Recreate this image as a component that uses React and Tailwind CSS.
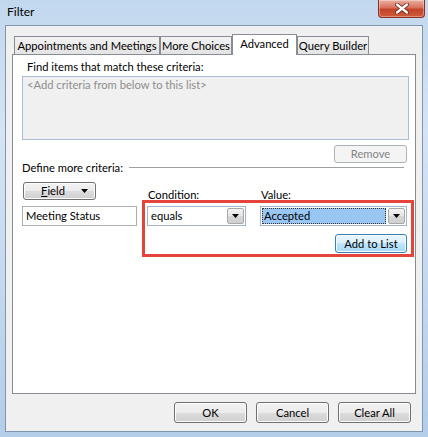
const btn =
  "flex items-center justify-center rounded-[3px] border border-[#707070] bg-[linear-gradient(#f2f2f2_0%,#ebebeb_50%,#dddddd_50%,#cfcfcf_100%)] shadow-[inset_0_0_0_1px_#fcfcfc] text-black";

function Tri() {
  return (
    <svg width="7" height="4" viewBox="0 0 7 4">
      <path d="M0 0H7L3.5 4Z" fill="#000" />
    </svg>
  );
}

function DropBtn() {
  return (
    <div className="m-[1px] flex w-[17px] items-center justify-center rounded-[2px] border border-[#a9a9a9] bg-[linear-gradient(#f3f3f3_0%,#e6e6e6_50%,#d7d7d7_50%,#cfcfcf_100%)]">
      <Tri />
    </div>
  );
}

function Tab({ label, w, selected }) {
  if (selected) {
    return (
      <div
        className={`relative z-10 -mb-px flex h-[21px] items-start justify-center whitespace-nowrap border border-b-0 border-[#898c95] bg-white pt-[2px] ${w}`}
      >
        {label}
      </div>
    );
  }
  return (
    <div
      className={`flex h-[18px] items-center justify-center whitespace-nowrap border border-b-0 border-[#898c95] bg-[linear-gradient(#f3f3f3,#e3e3e3)] ${w}`}
    >
      {label}
    </div>
  );
}

export default function App() {
  return (
    <div className="h-[437px] w-[428px] overflow-hidden bg-[linear-gradient(180deg,#c2d8ee_0%,#d4e4f4_30%,#c6daef_60%,#b4cde8_100%)] font-['Lato',sans-serif] text-[11.2px] leading-[14px] text-black">
      {/* title bar */}
      <div className="flex h-[25px] items-start justify-between">
        <div className="pl-[7px] pt-[5px] text-[12px]">Filter</div>
        <div className="mr-[3px] flex h-[18px] w-[47px] items-center justify-center rounded-b-[4px] border border-t-0 border-[#8a2f22] bg-[linear-gradient(#eab0a0_0%,#d8705c_45%,#c24428_55%,#d0593c_100%)] shadow-[inset_0_0_0_1px_rgba(255,255,255,0.35)]">
          <svg width="14" height="11" viewBox="0 0 14 11">
            <path
              d="M2 1.5L12 9.5M12 1.5L2 9.5"
              stroke="#5a1a10"
              strokeWidth="3.8"
              strokeLinecap="round"
            />
            <path
              d="M2 1.5L12 9.5M12 1.5L2 9.5"
              stroke="#fff"
              strokeWidth="2.4"
              strokeLinecap="round"
            />
          </svg>
        </div>
      </div>

      {/* body */}
      <div className="ml-[5px] flex h-[407px] w-[418px] flex-col border border-[#8196ae] bg-[#f0f0f0] px-[6px] pt-[8px]">
        {/* tabs */}
        <div className="flex h-[20px] items-end pl-[2px]">
          <Tab label="Appointments and Meetings" w="w-[146px]" />
          <Tab label="More Choices" w="w-[72px]" />
          <Tab label="Advanced" w="w-[65px]" selected />
          <Tab label="Query Builder" w="w-[72px]" />
        </div>

        {/* panel */}
        <div className="h-[340px] w-[404px] border border-[#898c95] bg-white pl-[9px] pr-[6px] pt-[4px]">
          <div className="pl-[5px] leading-[16px]">Find items that match these criteria:</div>
          <div className="mt-[1px] h-[64px] border border-[#a8bcd5] bg-[#f0f0f0] pl-[4px] pt-[1px] text-[#8e8e8e]">
            &lt;Add criteria from below to this list&gt;
          </div>
          <div className="mt-[5px] flex justify-end pr-[2px]">
            <div className="flex h-[18px] w-[73px] items-center justify-center rounded-[3px] border border-[#adb2b5] bg-[#f4f4f4] text-[#838383]">
              Remove
            </div>
          </div>
          <div className="-mt-[3px] flex h-[16px] items-center gap-[6px] pr-[5px]">
            <span>Define more criteria:</span>
            <div className="h-[2px] flex-1 border-t border-b border-t-[#a0a0a0] border-b-white" />
          </div>

          {/* criteria */}
          <div className="relative mt-[6px] flex">
            <div className="flex w-[115px] flex-col">
              <div className={`${btn} ml-[1px] h-[18px] w-[73px] gap-[16px] pl-[10px]`}>
                <span>
                  <span className="underline">F</span>ield
                </span>
                <Tri />
              </div>
              <div className="mt-[6px] flex h-[20px] items-center border border-[#abadb3] pl-[3px]">
                Meeting Status
              </div>
            </div>

            <div className="ml-[10px] flex w-[99px] flex-col pt-[6px]">
              <div className="h-[14px] pl-[1px]">Condition:</div>
              <div className="mt-[4px] flex h-[20px] border border-[#a3b4c6]">
                <div className="flex flex-1 items-center pl-[3px]">equals</div>
                <DropBtn />
              </div>
            </div>

            <div className="ml-[14px] flex w-[147px] flex-col pt-[6px]">
              <div className="h-[14px] pl-[1px]">Value:</div>
              <div className="mt-[4px] flex h-[20px] border border-[#a3b4c6]">
                <div className="m-[1px] flex flex-1 items-center border border-dotted border-[#333] bg-[#99c6f3] pl-[1px]">
                  Accepted
                </div>
                <DropBtn />
              </div>
              <div className="mt-[8px] flex justify-end">
                <div className="flex h-[19px] w-[72px] items-center justify-center rounded-[3px] border border-[#3c7fb1] bg-[linear-gradient(#eaf6fd_0%,#d9f0fc_50%,#bee6fd_50%,#a7d9f5_100%)] shadow-[inset_0_0_0_1px_#f6fbfe]">
                  Add to List
                </div>
              </div>
            </div>

            {/* annotation box */}
            <div className="pointer-events-none absolute left-[120px] top-[18px] h-[57px] w-[272px] border-[3px] border-[#e5443c]" />
          </div>
        </div>

        {/* dialog buttons */}
        <div className="mt-[8px] flex justify-end gap-[9px] pr-[5px]">
          <div className={`${btn} h-[21px] w-[73px]`}>OK</div>
          <div className={`${btn} h-[21px] w-[73px]`}>Cancel</div>
          <div className={`${btn} h-[21px] w-[73px]`}>Clear All</div>
        </div>
      </div>
    </div>
  );
}
